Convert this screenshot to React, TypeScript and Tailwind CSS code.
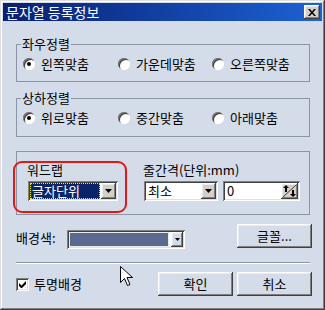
import React from "react";

const raised =
  "shadow-[inset_-1px_-1px_0_#404040,inset_1px_1px_0_#ffffff,inset_-2px_-2px_0_#808080,inset_2px_2px_0_#e6ebf4]";
const sunken =
  "shadow-[inset_1px_1px_0_#808080,inset_-1px_-1px_0_#ffffff,inset_2px_2px_0_#404040,inset_-2px_-2px_0_#dfdfdf]";

function DownArrow() {
  return (
    <svg width="7" height="4" viewBox="0 0 7 4">
      <path d="M0 0h7L3.5 4z" fill="#000" />
    </svg>
  );
}

function Radio({ checked }: { checked?: boolean }) {
  return (
    <span className="w-[12px] h-[12px] rounded-full bg-white flex items-center justify-center shrink-0 shadow-[inset_1px_1px_0_#808080,inset_-1px_-1px_0_#ffffff,inset_2px_2px_0_#404040]">
      {checked && <span className="w-[4px] h-[4px] rounded-full bg-black" />}
    </span>
  );
}

type Group = { title: string; items: string[] };

const groups: Group[] = [
  { title: "좌우정렬", items: ["왼쪽맞춤", "가운데맞춤", "오른쪽맞춤"] },
  { title: "상하정렬", items: ["위로맞춤", "중간맞춤", "아래맞춤"] },
];

const itemWidths = ["w-[95px]", "w-[94px]", "w-[80px]"];

function RadioGroup({ group, first }: { group: Group; first: boolean }) {
  return (
    <fieldset
      className={`border border-[#8c95a6] ${first ? "mt-[16px] pb-[10px]" : "mt-[9px] pb-[11px]"}`}
    >
      <legend className="ml-[4px] px-[1px] leading-[14px]">{group.title}</legend>
      <div className="pt-[6px] pl-[6px] flex items-center">
        {group.items.map((label, i) => (
          <div key={label} className={`${itemWidths[i]} flex items-center gap-[6px]`}>
            <Radio checked={i === 0} />
            <span className="leading-[14px]">{label}</span>
          </div>
        ))}
      </div>
    </fieldset>
  );
}

function Button({ label }: { label: string }) {
  return (
    <div className={`w-[75px] h-[24px] flex items-center justify-center bg-[#d4dcea] ${raised}`}>
      {label}
    </div>
  );
}

export default function App() {
  return (
    <div className="relative w-[325px] h-[310px] p-[3px] bg-[#d4dcea] text-[13px] text-black font-['Noto_Sans_CJK_KR',sans-serif] shadow-[inset_-1px_-1px_0_#404040,inset_1px_1px_0_#e0e0e0,inset_-2px_-2px_0_#808080,inset_2px_2px_0_#ffffff]">
      {/* title bar */}
      <div className="h-[18px] flex items-center justify-between pl-[3px] pr-[2px] bg-linear-to-r from-[#0a1f74] to-[#1d62d4]">
        <span className="text-white text-[14px] leading-[16px]">문자열 등록정보</span>
        <div className={`w-[16px] h-[14px] bg-[#d4d0c8] flex items-center justify-center ${raised}`}>
          <svg width="8" height="7" viewBox="0 0 8 7">
            <path d="M0 0h2l2 2.5L6 0h2L5 3.5 8 7H6L4 4.5 2 7H0l3-3.5z" fill="#000" />
          </svg>
        </div>
      </div>

      <div className="pl-[13px] pr-[12px]">
        {groups.map((g, i) => (
          <RadioGroup key={g.title} group={g} first={i === 0} />
        ))}

        {/* wrap / line spacing */}
        <div className="mt-[14px] border border-[#8c95a6] pt-[11px] pb-[13px] pl-[11px] flex">
          <div className="w-[116px]">
            <div className="leading-[14px] -ml-[1px]">워드랩</div>
            <div className={`mt-[4px] w-[90px] h-[20px] bg-white p-[2px] flex ${sunken}`}>
              <div className="flex-1 mr-[1px] bg-[#0a246a] border border-dotted border-[#f0f000] text-white leading-[14px] pl-[1px]">
                글자단위
              </div>
              <div className={`w-[15px] bg-[#d4d0c8] flex items-center justify-center ${raised}`}>
                <DownArrow />
              </div>
            </div>
          </div>
          <div>
            <div className="leading-[14px] -ml-[1px]">줄간격(단위:mm)</div>
            <div className="mt-[4px] flex gap-[5px]">
              <div className={`w-[74px] h-[20px] bg-white p-[2px] flex ${sunken}`}>
                <div className="flex-1 leading-[16px] pl-[2px]">최소</div>
                <div className={`w-[15px] bg-[#d4d0c8] flex items-center justify-center ${raised}`}>
                  <DownArrow />
                </div>
              </div>
              <div className={`w-[77px] h-[20px] bg-white p-[2px] flex ${sunken}`}>
                <div className="flex-1 leading-[16px] pl-[2px]">0</div>
                <div className={`w-[17px] bg-[#d4d0c8] ${raised}`}>
                  <svg width="17" height="16" viewBox="0 0 17 16">
                    <path d="M2 14L15 2" stroke="#404040" strokeWidth="1" />
                    <path d="M5 2l-3 3h2v4h2V5h2z" fill="#000" />
                    <path d="M12 14l3-3h-2V7h-2v4H9z" fill="#000" />
                  </svg>
                </div>
              </div>
            </div>
          </div>
        </div>

        {/* background colour row */}
        <div className="mt-[9px] h-[24px] flex items-center">
          <span className="w-[51px] leading-[14px] pt-[4px]">배경색:</span>
          <div className={`mt-[6px] w-[118px] h-[19px] bg-white p-[2px] flex gap-[2px] ${sunken}`}>
            <div className="flex-1 bg-[#5c6a8d] border border-[#e8ecf4]" />
            <div className={`w-[12px] bg-[#d4dcea] flex items-center justify-center ${raised}`}>
              <svg width="5" height="3" viewBox="0 0 5 3">
                <path d="M0 0h5L2.5 3z" fill="#000" />
              </svg>
            </div>
          </div>
          <div className="ml-auto -mr-[2px]">
            <Button label="글꼴..." />
          </div>
        </div>

        <div className="mt-[14px] h-[2px] border-t border-[#8c95a6] border-b border-b-white" />

        {/* bottom row */}
        <div className="mt-[8px] h-[24px] flex items-center">
          <div className={`w-[13px] h-[13px] bg-white flex items-center justify-center ${sunken}`}>
            <svg width="7" height="7" viewBox="0 0 7 7">
              <path d="M0 2v3l2 2h1l4-4V0L2.5 4.5z" fill="#000" />
            </svg>
          </div>
          <span className="ml-[5px] leading-[14px]">투명배경</span>
          <div className="ml-auto -mr-[2px] flex gap-[4px]">
            <Button label="확인" />
            <Button label="취소" />
          </div>
        </div>
      </div>

      {/* highlight annotation */}
      <div className="absolute left-[13px] top-[161px] w-[114px] h-[52px] border-2 border-[#e01818] rounded-[9px]" />

      {/* mouse cursor */}
      <svg className="absolute left-[120px] top-[266px]" width="13" height="21" viewBox="0 0 13 21">
        <path
          d="M0.5 0.5v16l4-4 3 7 2.5-1-3-7h5.5z"
          fill="#fff"
          stroke="#000"
          strokeWidth="1"
          strokeLinejoin="miter"
        />
      </svg>
    </div>
  );
}
